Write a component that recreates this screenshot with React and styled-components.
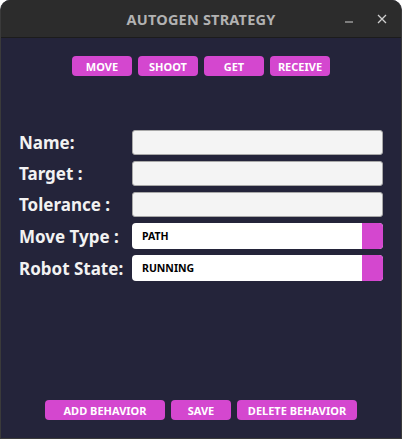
import React from 'react';
import styled, { createGlobalStyle } from 'styled-components';

const GlobalStyle = createGlobalStyle`
  html, body {
    margin: 0;
    padding: 0;
    background: #ffffff;
  }
  * {
    box-sizing: border-box;
  }
`;

const Window = styled.div`
  width: 402px;
  height: 439px;
  display: flex;
  flex-direction: column;
  border-radius: 10px 10px 0 0;
  overflow: hidden;
  background: #24243a;
  border: 1px solid #3a3a3a;
  border-top: none;
  font-family: 'Noto Sans', 'DejaVu Sans', sans-serif;
`;

const TitleBar = styled.header`
  position: relative;
  height: 38px;
  flex: none;
  display: flex;
  align-items: center;
  justify-content: center;
  background: #2c2c2c;
  border-bottom: 1px solid #1c1c1c;
`;

const Title = styled.h1`
  margin: 0;
  font-size: 14.5px;
  font-weight: 700;
  color: #b2b2b2;
  letter-spacing: 0.2px;
`;

const Controls = styled.div`
  position: absolute;
  right: 13px;
  top: 0;
  height: 37px;
  display: flex;
  align-items: center;
  gap: 21px;
`;

const ControlButton = styled.span`
  width: 12px;
  height: 12px;
  display: flex;
  align-items: center;
  justify-content: center;
`;

const Body = styled.main`
  flex: 1;
  display: flex;
  flex-direction: column;
  padding: 18px 18px 18px 18px;
`;

const ButtonRow = styled.div`
  display: flex;
  justify-content: center;
  gap: 6px;
`;

const PinkButton = styled.button`
  width: ${(p) => p.$w || 60}px;
  height: 20px;
  padding: 0;
  border: none;
  border-radius: 4px;
  background: #d447cf;
  color: #ffffff;
  font-family: 'Noto Sans', 'DejaVu Sans', sans-serif;
  font-size: 11px;
  font-weight: 700;
  cursor: pointer;
`;

const Form = styled.form`
  margin-top: 54px;
  display: grid;
  grid-template-columns: 113px 1fr;
  row-gap: 6px;
  align-items: center;
`;

const Label = styled.label`
  font-size: 17px;
  font-weight: 700;
  color: #f2f2f2;
  white-space: nowrap;
`;

const TextInput = styled.input`
  height: 25px;
  width: 100%;
  border: 1px solid #a8a8a8;
  border-radius: 3px;
  background: #f4f4f4;
  outline: none;
`;

const Select = styled.div`
  height: 26px;
  display: flex;
  align-items: center;
  background: #ffffff;
  border-radius: 4px;
  overflow: hidden;
`;

const SelectValue = styled.span`
  flex: 1;
  padding-left: 10px;
  font-size: 10.5px;
  font-weight: 700;
  color: #000000;
`;

const SelectArrow = styled.span`
  width: 21px;
  align-self: stretch;
  background: #d447cf;
`;

const BottomRow = styled(ButtonRow)`
  margin-top: auto;
`;

const fields = ['Name:', 'Target :', 'Tolerance :'];

export default function App() {
  return (
    <>
      <GlobalStyle />
      <Window>
        <TitleBar>
          <Title>AUTOGEN STRATEGY</Title>
          <Controls>
            <ControlButton>
              <svg width="10" height="10" viewBox="0 0 10 10">
                <line x1="1" y1="8" x2="9" y2="8" stroke="#cfcfcf" strokeWidth="1.2" />
              </svg>
            </ControlButton>
            <ControlButton>
              <svg width="10" height="10" viewBox="0 0 10 10">
                <path d="M1 1 L9 9 M9 1 L1 9" stroke="#cfcfcf" strokeWidth="1.3" />
              </svg>
            </ControlButton>
          </Controls>
        </TitleBar>
        <Body>
          <ButtonRow>
            <PinkButton>MOVE</PinkButton>
            <PinkButton>SHOOT</PinkButton>
            <PinkButton>GET</PinkButton>
            <PinkButton>RECEIVE</PinkButton>
          </ButtonRow>
          <Form onSubmit={(e) => e.preventDefault()}>
            {fields.map((f) => (
              <React.Fragment key={f}>
                <Label>{f}</Label>
                <TextInput type="text" />
              </React.Fragment>
            ))}
            <Label>Move Type :</Label>
            <Select>
              <SelectValue>PATH</SelectValue>
              <SelectArrow />
            </Select>
            <Label>Robot State:</Label>
            <Select>
              <SelectValue>RUNNING</SelectValue>
              <SelectArrow />
            </Select>
          </Form>
          <BottomRow>
            <PinkButton $w={120}>ADD BEHAVIOR</PinkButton>
            <PinkButton>SAVE</PinkButton>
            <PinkButton $w={120}>DELETE BEHAVIOR</PinkButton>
          </BottomRow>
        </Body>
      </Window>
    </>
  );
}
